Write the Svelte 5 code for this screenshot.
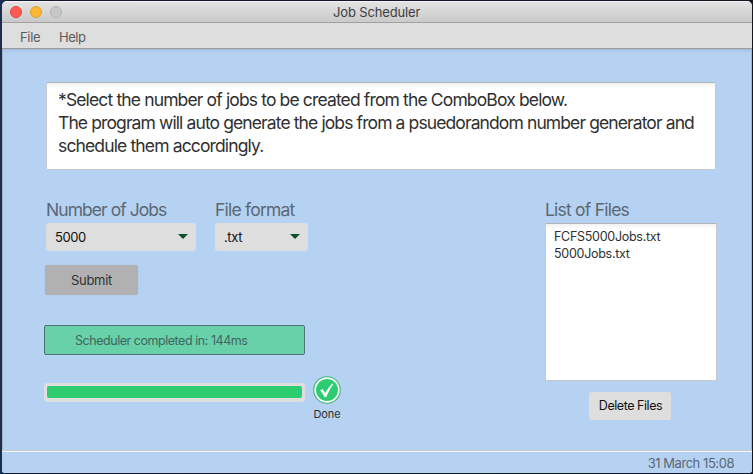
<script>
  const files = ['FCFS5000Jobs.txt', '5000Jobs.txt'];
  const menus = ['File', 'Help'];
</script>

<div class="desktop">
  <div class="window">
    <header>
      <span class="light red"></span>
      <span class="light amber"></span>
      <span class="light off"></span>
      <h1>Job Scheduler</h1>
    </header>
    <nav>
      {#each menus as menu}
        <span class={menu.toLowerCase()}>{menu}</span>
      {/each}
    </nav>
    <main>
      <div class="intro">
        <p>*Select the number of jobs to be created from the ComboBox below.</p>
        <p class="long">The program will auto generate the jobs from a psuedorandom number generator and</p>
        <p>schedule them accordingly.</p>
      </div>
      <div class="columns">
        <section class="left">
          <div class="fields">
            <div class="field jobs">
              <h2>Number of Jobs</h2>
              <div class="combo"><span>5000</span><i></i></div>
            </div>
            <div class="field format">
              <h2>File format</h2>
              <div class="combo"><span>.txt</span><i></i></div>
            </div>
          </div>
          <button class="submit">Submit</button>
          <div class="status"><span>Scheduler completed in: 144ms</span></div>
          <div class="progressrow">
            <div class="track"><div class="bar"></div></div>
            <div class="done">
              <svg width="28" height="28" viewBox="0 0 28 28">
                <circle cx="14" cy="14" r="13.3" fill="#fff" stroke="#38b56f" stroke-width="1.1" />
                <circle cx="14" cy="14" r="11" fill="#2ecc71" />
                <path d="M7.2 14.4 L9.4 13 L12.3 17 C14.2 13.2 16.6 10.1 19.6 7.4 L20.4 8 C17.5 12 15.2 16.1 13.4 21 L11.5 21 C10.4 18.5 9 16.2 7.2 14.4Z" fill="#fff" />
              </svg>
              <span>Done</span>
            </div>
          </div>
        </section>
        <section class="right">
          <h2>List of Files</h2>
          <ul>
            {#each files as file}
              <li>{file}</li>
            {/each}
          </ul>
          <button class="delete">Delete Files</button>
        </section>
      </div>
    </main>
    <footer><span>31 March 15:08</span></footer>
  </div>
</div>

<style>
  :global(body) { margin: 0; }
  * { box-sizing: border-box; }
  h1, h2, p, ul { margin: 0; padding: 0; font-weight: 400; }
  span, p, h1, h2, li, button { white-space: nowrap; }
  .desktop {
    width: 753px; height: 474px; padding: 1px 1px 1px 2px; overflow: hidden;
    background: linear-gradient(90deg, #1b3152 0, #141a30 10px, #17131f 745px, #151518 100%);
    font-family: Inter, "Liberation Sans", sans-serif;
  }
  .window {
    height: 472px; display: flex; flex-direction: column; overflow: hidden;
    border-radius: 5px 5px 3px 3px; background: #b5d2f3;
  }
  header {
    height: 22px; flex: none; display: flex; align-items: center; gap: 8px; padding-left: 8px;
    background: linear-gradient(#e2e2e2, #cacaca);
    border-top: 1px solid #f5f3f5; border-bottom: 1px solid #a3a1a3;
  }
  .light { width: 12px; height: 12px; border-radius: 50%; border: 1px solid; }
  .red { background: #ff5b54; border-color: #e2463f; }
  .amber { background: #fdb731; border-color: #dea02a; }
  .off { background: #c9c7c9; border-color: #b1afb1; }
  h1 { margin-left: 263px; font-size: 13px; line-height: 20px; color: #3e3d3e; letter-spacing: -0.15px; }
  nav {
    height: 26px; flex: none; display: flex; padding: 2px 0 0 18px; gap: 19px;
    background: #dedede; border-bottom: 1px solid #9b9b9b;
    font-size: 13px; line-height: 24px; color: #5c5c5c; letter-spacing: -0.5px;
  }
  nav .file { width: 20px; letter-spacing: -0.3px; }
  main {
    flex: 1; padding: 33px 36px 0 42px; border: 1px solid #a6b3c4; border-width: 0 1px;
    background: linear-gradient(#a5c0de, #b5d2f3 4px);
  }
  .intro {
    width: 670px; height: 88px; margin-left: 1px; padding: 5px 0 0 11px;
    border: 1px solid #c5c9cd; border-top-color: #b2b5b8; border-radius: 2px;
    background: linear-gradient(#f2f2f2, #fff 5px);
    font-size: 17.5px; line-height: 23px; color: #303030; letter-spacing: -0.86px;
  }
  .intro .long { letter-spacing: -0.89px; }
  .columns { display: flex; justify-content: space-between; padding-top: 28px; }
  .left { width: 300px; }
  .fields { display: flex; gap: 19px; padding-left: 1px; }
  h2 { height: 25px; font-size: 17.5px; line-height: 23px; color: #5c6874; letter-spacing: -0.78px; }
  .jobs h2 { letter-spacing: -0.95px; }
  .combo {
    display: flex; align-items: center; justify-content: space-between; width: 150px; height: 28px;
    padding: 0 8px 0 9px; border-radius: 3px; background: #dedede;
    font-size: 13px; color: #111; letter-spacing: -0.4px;
  }
  .format .combo { width: 93px; }
  .combo span { padding-bottom: 1px; }
  .combo i { border: 5px solid transparent; border-top-color: #0b5229; border-bottom: 0; margin-bottom: 1px; }
  button { border: 0; padding: 0; font: 13px Inter, "Liberation Sans", sans-serif; border-radius: 3px; }
  .submit { display: block; width: 93px; height: 30px; margin-top: 14px; background: #b1b1b1; color: #303030; letter-spacing: -0.3px; box-shadow: 0 0 1px #9fabb8; }
  .status {
    width: 261px; height: 30px; margin: 30px 0 0 -1px; padding-left: 30px;
    border: 1px solid #4d7674; border-radius: 2px; background: #69d1aa;
    font-size: 12.5px; line-height: 29px; color: #40655f; letter-spacing: -0.46px;
  }
  .progressrow { display: flex; gap: 8px; margin: 21px 0 0 -1px; }
  .track { width: 261px; height: 19px; margin-top: 7px; padding: 3px; border-radius: 4px; background: #dedede; }
  .bar { height: 12px; border-radius: 2px; background: #2ecc71; }
  .done { width: 28px; display: flex; flex-direction: column; align-items: center; font-size: 11px; line-height: 14px; color: #303030; letter-spacing: -0.1px; }
  .done svg { display: block; margin-bottom: 3px; }
  .right { width: 172px; margin-right: -2px; display: flex; flex-direction: column; }
  ul {
    list-style: none; width: 172px; height: 158px; padding: 4px 0 0 8px;
    border: 1px solid #c5c9cd; border-top-color: #b2b5b8; border-radius: 1px;
    background: linear-gradient(#f2f2f2, #fff 5px);
    font-size: 12.5px; line-height: 17px; color: #303030; letter-spacing: -0.28px;
  }
  .delete { width: 82px; height: 28px; margin: 11px 0 0 44px; padding: 0 0 1px 1px; background: #dedede; color: #111; font-size: 12.5px; letter-spacing: -0.45px; }
  footer {
    height: 23px; flex: none; display: flex; justify-content: flex-end; padding-right: 18px;
    border-top: 1px solid #cbc9c9; box-shadow: inset 0 1px #f5f5f5; background: #b5d2f3;
    font-size: 13px; line-height: 24px; color: #5c6874; letter-spacing: -0.45px;
  }
</style>
